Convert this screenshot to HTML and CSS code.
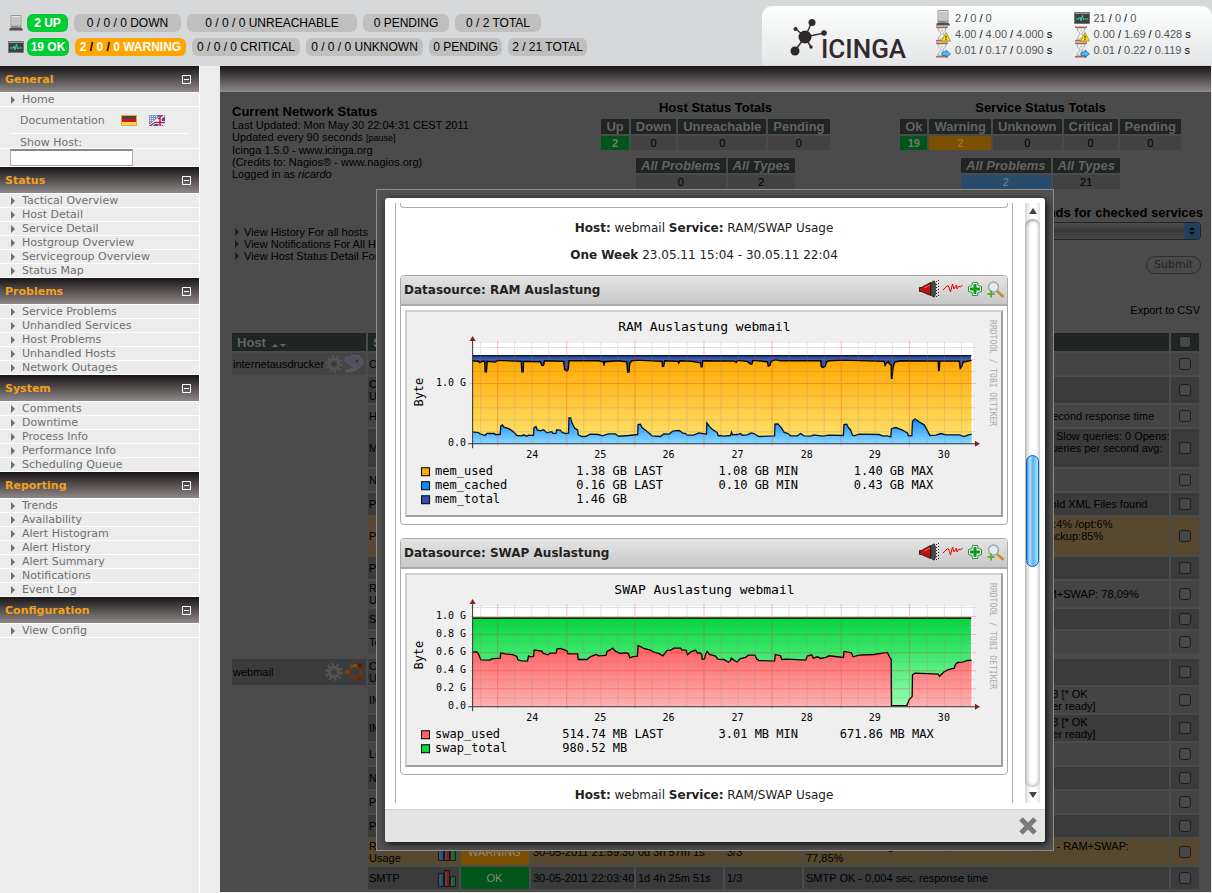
FILE: index.html
```html
<!DOCTYPE html>
<html lang="en">
<head>
<meta charset="utf-8">
<title>Icinga</title>
<link rel="stylesheet" href="styles.css">
</head>
<body>
<svg class="defs" width="0" height="0" aria-hidden="true">
  <defs>
    <clipPath id="plot"><path d="M262 200H1757V540H262z"/></clipPath>
    <linearGradient id="gOrange" x1="0" y1="0" x2="0" y2="1"><stop offset="0" stop-color="#ffa800"/><stop offset="1" stop-color="#ffe573"/></linearGradient>
    <linearGradient id="gBlue" gradientUnits="userSpaceOnUse" x1="0" y1="443" x2="0" y2="521"><stop offset="0" stop-color="#0a8cff"/><stop offset="1" stop-color="#8cd8ff"/></linearGradient>
    <linearGradient id="gGreen" x1="0" y1="0" x2="0" y2="1"><stop offset="0" stop-color="#00d83c"/><stop offset="1" stop-color="#98ffb4"/></linearGradient>
    <linearGradient id="gRed" x1="0" y1="0" x2="0" y2="1"><stop offset="0" stop-color="#ff6060"/><stop offset="1" stop-color="#ffb0b0"/></linearGradient>
    <symbol id="server" viewBox="0 0 16 16"><path d="M3 .5h10V12H3z" fill="#e4e4e4" stroke="#999"/><path d="M4 3h8M4 5h8M4 7h8M4 9h8" stroke="#aaa"/><path d="M3 10.500h10V13H3z" fill="#888"/><path d="M2 13h12l1 2.500H1z" fill="#505050"/><path d="M10 11.500h2" stroke="#7c7"/></symbol>
    <symbol id="monitor" viewBox="0 0 16 16"><path d="M.5 2.500h15v11H.5z" fill="#3c4244" stroke="#777"/><path d="M1 3.500h14" stroke="#999"/><path d="M2 9h3l1-2 1 4 1.500-6 1 5 1-1H14" fill="none" stroke="#3fd0a8"/></symbol>
    <symbol id="hourglass" viewBox="0 0 16 16"><path d="M3 2c0 4 3 4 3 6s-3 2-3 6h8c0-4-3-4-3-6s3-2 3-6z" fill="#f4f8fa" stroke="#8aa4b4"/><path d="M5 4h4L7 6zM4 13c1-2 5-2 6 0z" fill="#e8c070"/><path d="M1 .5h12V2H1zM1 14h12v1.500H1z" fill="#b06a48"/></symbol>
    <symbol id="hg-warn" viewBox="0 0 16 16"><use href="#hourglass"/><path d="M11 6.500L15.500 15h-9z" fill="#ffdf20" stroke="#a88a00" stroke-width=".8"/><path d="M11 9.500v3M11 13v1.200" stroke="#222"/></symbol>
    <symbol id="hg-go" viewBox="0 0 16 16"><use href="#hourglass"/><path d="M7 10h4V8l4.500 4L11 15.500V13.500H7z" fill="#58b8f0" stroke="#2070b0" stroke-width=".8"/></symbol>
    <symbol id="horn" viewBox="0 0 20 18"><path d="M.5 7.500h2l9-5v13l-9-4h-2z" fill="#c01010" stroke="#222"/><path d="M5 8l6-3" stroke="#f66"/><path d="M12 3l2-2h1.500l1 3v10l-1 3H14l-2-2z" fill="#484848" stroke="#222" stroke-width=".6"/><path d="M17.500 1v16M19.500 0v18" stroke="#222" stroke-dasharray="1 2"/></symbol>
    <symbol id="pulse" viewBox="0 0 20 18"><path d="M0 10l4-4h1.500l2 6 2-8 1.500 5 2.500-4 .5 4 2-3 1.500 1 2-2" fill="none" stroke="#e80000"/></symbol>
    <symbol id="plus" viewBox="0 0 16 16"><path d="M5.500 1.500h5l.5 3 3.500 1v5l-3.500 1-.5 3h-5l-.5-3-3.500-1v-5l3.500-1z" fill="#fff" stroke="#2a9040"/><path d="M6.500 3h3v3.500H13v3H9.500V13h-3V9.500H3v-3h3.500z" fill="#0c9c1c"/></symbol>
    <symbol id="magnify" viewBox="0 0 17 17"><path d="M11 11l4.500 4" stroke="#c8902c" stroke-width="3" stroke-linecap="round"/><circle cx="6.500" cy="6" r="5" fill="#dfeaf2" stroke="#a8a8a8" stroke-width="1.500"/><path d="M4 9.500v7M.5 13h7" stroke="#60b030" stroke-width="2"/></symbol>
    <symbol id="gear" viewBox="0 0 20 20"><circle cx="10" cy="10" r="7.500" fill="none" stroke="#535353" stroke-width="3" stroke-dasharray="2.400 2.310"/><circle cx="10" cy="10" r="5" fill="#484848" stroke="#575757" stroke-width="2"/><circle cx="10" cy="10" r="2" fill="#383838"/></symbol>
    <symbol id="swirl" viewBox="0 0 20 20"><path d="M2 3c2 1 4 0 6-1 5-2 10 1 11 6-1 5-7 9-16 10-2 0-2-2 0-2 4 0 7-2 8-5-3 1-5 0-6-2-3 0-5-3-3-6z" fill="#50505f" stroke="#5e5e72"/><circle cx="13" cy="7" r="1.200" fill="#33333f"/></symbol>
    <symbol id="ubuntu" viewBox="0 0 20 20"><circle cx="11" cy="10" r="6" fill="none" stroke="#6a3412" stroke-width="3"/><path d="M7 5a6.500 6.500 0 0 1 8 0" fill="none" stroke="#70501a" stroke-width="3"/><circle cx="3" cy="10" r="2.300" fill="#6c4214"/><circle cx="15.500" cy="3.500" r="2.300" fill="#5c1410"/><circle cx="15.500" cy="16.500" r="2.300" fill="#6c2410"/></symbol>
    <symbol id="bars" viewBox="0 0 20 20"><path d="M1.500 5.500h5v13h-5z" fill="#24506c" stroke="#101c28"/><path d="M7.500 2.500h5v16h-5z" fill="#6c2420" stroke="#2c0c0c"/><path d="M13.500 8.500h5v10h-5z" fill="#205c38" stroke="#0c2814"/><path d="M3 7v11M9 4v14M15 10v8" stroke="#5c5c5c"/></symbol>
    <symbol id="minus" viewBox="0 0 9 9"><path d="M.5.5h8v8h-8zM2 4.500h5" fill="none" stroke="#fff"/></symbol>
  </defs>
</svg>

<header class="top">
  <div class="tallies">
    <div class="tally">
      <svg width="16" height="16"><use href="#server"/></svg>
      <ul class="badges hosts"><li class="ok">2 UP</li><li>0 / 0 / 0 DOWN</li><li>0 / 0 / 0 UNREACHABLE</li><li>0 PENDING</li><li>0 / 2 TOTAL</li></ul>
    </div>
    <div class="tally">
      <svg width="16" height="16"><use href="#monitor"/></svg>
      <ul class="badges services"><li class="ok">19 OK</li><li class="warn">2 <i>/</i> 0 <i>/</i> 0 WARNING</li><li>0 / 0 / 0 CRITICAL</li><li>0 / 0 / 0 UNKNOWN</li><li>0 PENDING</li><li>2 / 21 TOTAL</li></ul>
    </div>
  </div>
  <div class="brand">
    <svg class="logo" viewBox="0 0 120 46" role="img" aria-label="Icinga">
      <g stroke="#3a3234" stroke-width="1.500"><path d="M15 19L22 4M15 19L6 11M15 19L34 15M15 19L4 34M15 19L21 29" fill="none"/></g>
      <g fill="#2e2829"><circle cx="15" cy="19" r="6.500"/><circle cx="22" cy="4.500" r="3.500"/><circle cx="5.500" cy="11" r="2"/><circle cx="34" cy="15" r="2.800"/><circle cx="5" cy="33" r="4.500"/><circle cx="21" cy="29" r="1.700"/></g>
      <text x="31" y="40" class="logo-text">ICINGA</text>
    </svg>
    <div class="perf">
      <div><svg width="16" height="16"><use href="#server"/></svg><span>2 <i>/</i> 0 <i>/</i> 0</span></div>
      <div><svg width="16" height="16"><use href="#hg-warn"/></svg><span>4.00 <i>/</i> 4.00 <i>/</i> 4.000 <i>s</i></span></div>
      <div><svg width="16" height="16"><use href="#hg-go"/></svg><span>0.01 <i>/</i> 0.17 <i>/</i> 0.090 <i>s</i></span></div>
    </div>
    <div class="perf">
      <div><svg width="16" height="16"><use href="#monitor"/></svg><span>21 <i>/</i> 0 <i>/</i> 0</span></div>
      <div><svg width="16" height="16"><use href="#hg-warn"/></svg><span>0.00 <i>/</i> 1.69 <i>/</i> 0.428 <i>s</i></span></div>
      <div><svg width="16" height="16"><use href="#hg-go"/></svg><span>0.01 <i>/</i> 0.22 <i>/</i> 0.119 <i>s</i></span></div>
    </div>
  </div>
</header>

<div class="frames">
  <nav class="side">
    <h2>General <button aria-label="Collapse General"><svg width="9" height="9"><use href="#minus"/></svg></button></h2>
    <ul><li><a href="#">Home</a></li></ul>
    <div class="docs"><span>Documentation</span>
      <a href="#" aria-label="German"><svg width="16" height="11" viewBox="0 0 16 11"><path d="M0 0h16v11H0z" fill="#d8a838"/><path d="M1 1h14v3H1z" fill="#444"/><path d="M1 4h14v3H1z" fill="#d81010"/><path d="M1 7h14v3H1z" fill="#ffd860"/></svg></a>
      <a href="#" aria-label="English"><svg width="16" height="11" viewBox="0 0 16 11"><path d="M0 0h16v11H0z" fill="#3c50a8"/><path d="M0 0h9v5L0 9z" fill="#8098d8"/><path d="M1 1.500h7M1 3.500h6M1 5.500h4" stroke="#fff" stroke-dasharray="1 1"/><path d="M1 11l14-11M8 4l8 6" stroke="#fff" stroke-width="3"/><path d="M6 7.500h10M11 2v9" stroke="#fff" stroke-width="3"/><path d="M5 7.500h11M11 2v9M1 11l4-3M9 4l5-4" stroke="#d81830" stroke-width="1.500"/></svg></a>
    </div>
    <form class="finder"><label for="show-host">Show Host:</label><div><input id="show-host" type="text"></div></form>
    <h2>Status <button aria-label="Collapse Status"><svg width="9" height="9"><use href="#minus"/></svg></button></h2>
    <ul><li><a href="#">Tactical Overview</a></li><li><a href="#">Host Detail</a></li><li><a href="#">Service Detail</a></li><li><a href="#">Hostgroup Overview</a></li><li><a href="#">Servicegroup Overview</a></li><li><a href="#">Status Map</a></li></ul>
    <h2>Problems <button aria-label="Collapse Problems"><svg width="9" height="9"><use href="#minus"/></svg></button></h2>
    <ul><li><a href="#">Service Problems</a></li><li><a href="#">Unhandled Services</a></li><li><a href="#">Host Problems</a></li><li><a href="#">Unhandled Hosts</a></li><li><a href="#">Network Outages</a></li></ul>
    <h2>System <button aria-label="Collapse System"><svg width="9" height="9"><use href="#minus"/></svg></button></h2>
    <ul><li><a href="#">Comments</a></li><li><a href="#">Downtime</a></li><li><a href="#">Process Info</a></li><li><a href="#">Performance Info</a></li><li><a href="#">Scheduling Queue</a></li></ul>
    <h2>Reporting <button aria-label="Collapse Reporting"><svg width="9" height="9"><use href="#minus"/></svg></button></h2>
    <ul><li><a href="#">Trends</a></li><li><a href="#">Availability</a></li><li><a href="#">Alert Histogram</a></li><li><a href="#">Alert History</a></li><li><a href="#">Alert Summary</a></li><li><a href="#">Notifications</a></li><li><a href="#">Event Log</a></li></ul>
    <h2>Configuration <button aria-label="Collapse Configuration"><svg width="9" height="9"><use href="#minus"/></svg></button></h2>
    <ul><li><a href="#">View Config</a></li></ul>
  </nav>

  <main class="main">
    <div class="bar"></div>
    <div class="summary">
      <div class="network">
        <h1>Current Network Status</h1>
        Last Updated: Mon May 30 22:04:31 CEST 2011<br>
        Updated every 90 seconds <small>[pause]</small><br>
        Icinga 1.5.0 - www.icinga.org<br>
        (Credits to: Nagios® - www.nagios.org)<br>
        Logged in as <em>ricardo</em>
      </div>
      <div class="totals">
        <h3>Host Status Totals</h3>
        <table><tr><th>Up</th><th>Down</th><th>Unreachable</th><th>Pending</th></tr><tr><td class="c-ok">2</td><td>0</td><td>0</td><td>0</td></tr></table>
        <table class="all"><tr><th>All Problems</th><th>All Types</th></tr><tr><td>0</td><td>2</td></tr></table>
      </div>
      <div class="totals">
        <h3>Service Status Totals</h3>
        <table><tr><th>Ok</th><th>Warning</th><th>Unknown</th><th>Critical</th><th>Pending</th></tr><tr><td class="c-ok">19</td><td class="c-warn">2</td><td>0</td><td>0</td><td>0</td></tr></table>
        <table class="all"><tr><th>All Problems</th><th>All Types</th></tr><tr><td class="c-prob">2</td><td>21</td></tr></table>
      </div>
    </div>
    <div class="actions">
      <ul class="views"><li><a href="#">View History For all hosts</a></li><li><a href="#">View Notifications For All Hosts</a></li><li><a href="#">View Host Status Detail For All Hosts</a></li></ul>
      <form class="commands">
        <label for="cmd">Commands for checked services</label>
        <div class="pick"><select id="cmd"><option>Select command</option></select><span class="step"></span></div>
        <button type="button">Submit</button>
        <a href="#">Export to CSV</a>
      </form>
    </div>
    <table class="status">
      <colgroup><col class="w-host"><col class="w-svc"><col class="w-stat"><col class="w-last"><col class="w-dur"><col class="w-att"><col><col class="w-cb"></colgroup>
      <tr class="head"><th>Host <span class="sort"></span></th><th>Service</th><th>Status</th><th>Last Check</th><th>Duration</th><th>Attempt</th><th>Status Information</th><td><input type="checkbox" aria-label="All services"></td></tr>
      <tr class="lt h22"><td><div class="cell">internetausdrucker<svg width="20" height="20"><use href="#gear"/></svg><svg width="20" height="20"><use href="#swirl"/></svg></div></td><td>CPU Load</td><td></td><td></td><td></td><td></td><td></td><td><input type="checkbox" aria-label="CPU Load"></td></tr>
      <tr class="dk h26"><td></td><td>CPU<br>Usage</td><td></td><td></td><td></td><td></td><td></td><td><input type="checkbox" aria-label="CPU Usage"></td></tr>
      <tr class="lt h22"><td></td><td>HTTP</td><td></td><td></td><td></td><td></td><td>HTTP OK HTTP/1.1 200 OK - 452 bytes in 0.001 second response time</td><td><input type="checkbox" aria-label="HTTP"></td></tr>
      <tr class="dk h38"><td></td><td>MySQL</td><td></td><td></td><td></td><td></td><td>Uptime: 1201853 Threads: 1 Questions: 88312604 Slow queries: 0 Opens:<br>342 Flush tables: 1 Open tables: 64 Queries: 20 Queries per second avg:<br>0.73</td><td><input type="checkbox" aria-label="MySQL"></td></tr>
      <tr class="lt h22"><td></td><td>NTP</td><td></td><td></td><td></td><td></td><td></td><td><input type="checkbox" aria-label="NTP"></td></tr>
      <tr class="dk h22"><td></td><td>PNP</td><td></td><td></td><td></td><td></td><td>OK: 26 XML Files checked in perfdata dir today. 0 old XML Files found</td><td><input type="checkbox" aria-label="PNP"></td></tr>
      <tr class="wn h38"><td></td><td>Partitions</td><td></td><td></td><td></td><td></td><td>WARNING - Disk usage: /:42% /home:61% % /tmp:4% /opt:6%<br>/usr:38% /var:27% /srv:12% /boot:18% /dev /var/backup:85%<br>&nbsp;</td><td><input type="checkbox" aria-label="Partitions"></td></tr>
      <tr class="dk h22"><td></td><td>Ping</td><td></td><td></td><td></td><td></td><td></td><td><input type="checkbox" aria-label="Ping"></td></tr>
      <tr class="lt h26"><td></td><td>RAM/SWAP<br>Usage</td><td></td><td></td><td></td><td></td><td>OK - Usage: RAM: 81,42% - SWAP: 52,50% - RAM+SWAP: 78,09%</td><td><input type="checkbox" aria-label="RAM/SWAP Usage"></td></tr>
      <tr class="dk h20"><td></td><td>SSH</td><td></td><td></td><td></td><td></td><td></td><td><input type="checkbox" aria-label="SSH"></td></tr>
      <tr class="lt h22"><td></td><td>Total</td><td></td><td></td><td></td><td></td><td></td><td><input type="checkbox" aria-label="Total"></td></tr>
      <tr class="gap"><td colspan="8"></td></tr>
      <tr class="dk h26"><td><div class="cell">webmail<svg width="20" height="20"><use href="#gear"/></svg><svg width="20" height="20"><use href="#ubuntu"/></svg></div></td><td>CPU<br>Usage</td><td></td><td></td><td></td><td></td><td></td><td><input type="checkbox" aria-label="webmail CPU"></td></tr>
      <tr class="lt h26"><td></td><td>IMAP</td><td></td><td></td><td></td><td></td><td>IMAP OK - 0.001 second response time on port 143 [* OK<br>[CAPABILITY IMAP4rev1 LOGIN-REFERRAL server ready]</td><td><input type="checkbox" aria-label="IMAP"></td></tr>
      <tr class="dk h26"><td></td><td>IMAPS</td><td></td><td></td><td></td><td></td><td>IMAP OK - 0.001 second response time on port 993 [* OK<br>[CAPABILITY IMAP4rev1 LOGIN-REFERRAL server ready]</td><td><input type="checkbox" aria-label="IMAPS"></td></tr>
      <tr class="lt h22"><td></td><td>Load</td><td></td><td></td><td></td><td></td><td></td><td><input type="checkbox" aria-label="Load"></td></tr>
      <tr class="dk h22"><td></td><td>NTP</td><td></td><td></td><td></td><td></td><td></td><td><input type="checkbox" aria-label="webmail NTP"></td></tr>
      <tr class="lt h22"><td></td><td>Ping</td><td></td><td></td><td></td><td></td><td></td><td><input type="checkbox" aria-label="webmail Ping"></td></tr>
      <tr class="dk h22"><td></td><td>POP3</td><td></td><td></td><td></td><td></td><td></td><td><input type="checkbox" aria-label="POP3"></td></tr>
      <tr class="wn h26"><td></td><td><div class="cell">RAM/SWAP<br>Usage<svg width="20" height="20"><use href="#bars"/></svg></div></td><td class="s-warn">WARNING</td><td>30-05-2011 21:59:30</td><td>0d 3h 57m 1s</td><td>3/3</td><td>WARNING - Usage: RAM: 91,20% - SWAP: 52,5% - RAM+SWAP:<br>77,85%</td><td><input type="checkbox" aria-label="webmail RAM"></td></tr>
      <tr class="dk h22"><td></td><td><div class="cell">SMTP<svg width="20" height="20"><use href="#bars"/></svg></div></td><td class="s-ok">OK</td><td>30-05-2011 22:03:40</td><td>1d 4h 25m 51s</td><td>1/3</td><td>SMTP OK - 0,004 sec. response time</td><td><input type="checkbox" aria-label="SMTP"></td></tr>
    </table>

    <div class="overlay">
      <section class="dialog" role="dialog" aria-label="Performance graphs">
        <div class="sheet">
          <div class="sheet-body">
            <div class="view">
              <div class="tail"></div>
              <p class="first"><b>Host:</b> webmail <b>Service:</b> RAM/SWAP Usage</p>
              <p class="range"><b>One Week</b> 23.05.11 15:04 - 30.05.11 22:04</p>
              <article class="source">
                <header><h4>Datasource: RAM Auslastung</h4><span class="tools"><svg width="20" height="18"><use href="#horn"/></svg><svg width="20" height="18"><use href="#pulse"/></svg><svg width="16" height="16"><use href="#plus"/></svg><svg width="17" height="17"><use href="#magnify"/></svg></span></header>
                <svg class="graph" viewBox="407 312 593 203">
                  <path d="M472 343h500v100H472z" fill="#fff"/>
                  <g transform="translate(385 270) scale(.33333)" clip-path="url(#plot)">
                    <path d="M262 258H1755V521H262z" fill="#3350a4"/>
                    <path fill="url(#gOrange)" stroke="#000" stroke-width="4" d="M256 521V272H262L280 274 284 278 290 274H299L300 305H304L306 274 330 276 338 271 408 274 410 305H414L415 274 465 275 470 286H475L478 272 535 274 538 298 545 303 549 298 551 272H640L655 276 656 287 658 275 700 272 724 275 727 306H731L733 280 740 272 756 270 830 274 831 289 835 288 838 272 878 274 880 279 884 272 920 274 945 278 947 290H950L952 272 1045 273 1052 277 1057 271 1085 274 1095 282H1099L1102 271 1145 275 1148 288 1153 286 1157 274 1170 269 1185 272H1305L1307 290 1313 292 1319 288 1322 276 1330 272 1375 270 1495 274 1498 286 1503 278 1508 275 1511 282 1516 284 1517 325H1519L1522 290 1527 276 1545 272 1657 273 1658 301H1660L1662 273H1720L1723 295 1727 290 1732 276 1757 271H1765V521"/>
                    <path fill="url(#gBlue)" stroke="#001428" stroke-width="4" d="M256 521V485H262L280 487 285 491 300 496 305 490H328L330 493H345L347 467 352 464 355 470 372 476 385 485 395 496 410 497 415 494 425 498 430 495 445 496 446 474 452 469 456 479 465 482 475 479 485 488 500 484 502 489 512 490 514 479 525 480 530 486 540 490 550 489 551 443H556L560 458 568 474 577 479 579 494 590 499H600L615 492 640 493 650 497 670 491H690L700 498 730 496 757 493 758 463 765 462 770 472 785 484 795 492 800 497 825 499 835 491 850 492 862 483 880 481 887 484 890 488 900 490 905 495H925L940 488 963 492 964 458 973 470 980 477 995 487 998 497 1005 496 1015 498 1035 496 1038 486 1041 494 1055 493 1065 490 1070 495 1085 494 1097 488 1105 490 1120 499 1167 497 1168 462 1177 461 1188 474 1195 486 1207 490 1215 497H1235L1245 490 1255 497 1275 498 1285 494 1310 498 1330 495 1373 496 1375 463 1383 462 1388 472 1395 480 1400 495 1405 497 1420 492 1480 493 1490 497H1505L1515 500 1517 476 1530 472 1550 480 1565 488 1567 496 1578 497 1580 453 1587 446 1600 455 1615 464 1625 482 1632 496 1650 495 1665 490 1680 494H1720L1735 499 1745 495 1757 492H1765V521"/>
                    <path d="M262 257H1757" stroke="#0c1838" stroke-width="5"/>
                  </g>
                  <g class="grid">
                    <path d="M480.500 342v101M514.500 342v101M531.500 342v101M548.500 342v101M583.500 342v101M600.500 342v101M617.500 342v101M651.500 342v101M668.500 342v101M686.500 342v101M720.500 342v101M737.500 342v101M754.500 342v101M788.500 342v101M806.500 342v101M823.500 342v101M857.500 342v101M874.500 342v101M891.500 342v101M926.500 342v101M943.500 342v101M960.500 342v101M471 347.500h503M471 359.500h503M471 371.500h503M471 395.500h503M471 407.500h503M471 419.500h503M471 431.500h503"/>
                    <path class="major" d="M497.500 341v105M566.500 341v105M634.500 341v105M703.500 341v105M771.500 341v105M840.500 341v105M908.500 341v105M470 383.500h505"/>
                  </g>
                  <path d="M472.500 341v107M468 443.500h508" stroke="#333"/>
                  <path d="M472.500 336l3 5h-6zM979 443.500l-5-3v6z" fill="#8c1c1c"/>
                  <text x="704" y="331" class="t-title">RAM Auslastung webmail</text>
                  <text transform="translate(423 392) rotate(-90)" class="t-unit">Byte</text>
                  <text transform="translate(989 373) rotate(90)" class="t-mark">RRDTOOL / TOBI OETIKER</text>
                  <g class="t-y"><text x="466" y="386">1.0 G</text><text x="466" y="446">0.0</text></g>
                  <g class="t-x"><text x="532" y="458">24</text><text x="600" y="458">25</text><text x="668" y="458">26</text><text x="737" y="458">27</text><text x="806" y="458">28</text><text x="874" y="458">29</text><text x="943" y="458">30</text></g>
                  <g stroke="#000"><path d="M421.500 467.500h8v8h-8z" fill="#ffa800"/><path d="M421.500 481.500h8v8h-8z" fill="#0a8cff"/><path d="M421.500 495.500h8v8h-8z" fill="#3350a4"/></g>
                  <g class="t-leg"><text x="435" y="475">mem_used</text><text x="435" y="489">mem_cached</text><text x="435" y="503">mem_total</text><text x="576" y="475">1.38 GB LAST</text><text x="576" y="489">0.16 GB LAST</text><text x="576" y="503">1.46 GB</text><text x="718" y="475">1.08 GB MIN</text><text x="718" y="489">0.10 GB MIN</text><text x="853" y="475">1.40 GB MAX</text><text x="853" y="489">0.43 GB MAX</text></g>
                </svg>
              </article>
              <article class="source">
                <header><h4>Datasource: SWAP Auslastung</h4><span class="tools"><svg width="20" height="18"><use href="#horn"/></svg><svg width="20" height="18"><use href="#pulse"/></svg><svg width="16" height="16"><use href="#plus"/></svg><svg width="17" height="17"><use href="#magnify"/></svg></span></header>
                <svg class="graph" viewBox="407 575 593 189">
                  <path d="M472 606h500v100H472z" fill="#fff"/>
                  <g transform="translate(385 530) scale(.33333)" clip-path="url(#plot)">
                    <path d="M262 264H1755V529H262z" fill="url(#gGreen)"/>
                    <path fill="url(#gRed)" stroke="#100" stroke-width="4" d="M256 529V366H262L275 365 281 373 287 389 315 390 320 386 345 384 347 368 360 371 385 374 395 379 398 389 412 393H427L430 377 435 380 445 379 447 360 470 363 473 369 488 374 495 369H513L515 357 525 355 545 362 548 371H577L579 388H605L615 380 632 373 640 377 662 376 665 364 672 361 682 354 690 363 705 370 722 368 730 371 733 383 740 380 756 378 758 347 767 350 775 355 795 360 805 366 820 370 832 377 838 370 845 361H855L865 354H885L890 360H902L906 374 915 366 930 360 937 370 943 367 949 374 950 387 957 386 960 374 965 364 972 373 990 378 997 387 1015 388 1028 396 1035 392 1037 384 1045 390 1055 396 1063 386 1080 382 1088 375H1108L1113 386 1120 391 1167 393 1169 373 1185 377 1188 388 1205 387 1260 390 1265 378 1278 374 1283 384 1295 380 1305 385 1323 381 1330 377 1373 382 1375 364 1397 368 1402 380 1420 375 1465 373 1495 368 1505 367 1511 380 1516 388 1517 526H1563L1570 508 1579 499 1580 434 1587 429 1657 432 1661 438 1667 432 1673 426 1685 419 1705 414 1708 404 1715 397 1730 396 1745 391 1757 390H1765V529"/>
                    <path d="M262 264H1757" stroke="#022808" stroke-width="5"/>
                  </g>
                  <g class="grid">
                    <path d="M480.500 605v101M514.500 605v101M531.500 605v101M548.500 605v101M583.500 605v101M600.500 605v101M617.500 605v101M651.500 605v101M668.500 605v101M686.500 605v101M720.500 605v101M737.500 605v101M754.500 605v101M788.500 605v101M806.500 605v101M823.500 605v101M857.500 605v101M874.500 605v101M891.500 605v101M926.500 605v101M943.500 605v101M960.500 605v101M471 607.500h503M471 625.500h503M471 643.500h503M471 661.500h503M471 679.500h503M471 697.500h503"/>
                    <path class="major" d="M497.500 604v105M566.500 604v105M634.500 604v105M703.500 604v105M771.500 604v105M840.500 604v105M908.500 604v105M470 616.500h505M470 634.500h505M470 652.500h505M470 670.500h505M470 688.500h505"/>
                  </g>
                  <path d="M472.500 604v107M468 706.500h508" stroke="#333"/>
                  <path d="M472.500 599l3 5h-6zM979 706.500l-5-3v6z" fill="#8c1c1c"/>
                  <text x="704" y="594" class="t-title">SWAP Auslastung webmail</text>
                  <text transform="translate(423 655) rotate(-90)" class="t-unit">Byte</text>
                  <text transform="translate(989 636) rotate(90)" class="t-mark">RRDTOOL / TOBI OETIKER</text>
                  <g class="t-y"><text x="466" y="619">1.0 G</text><text x="466" y="637">0.8 G</text><text x="466" y="655">0.6 G</text><text x="466" y="673">0.4 G</text><text x="466" y="691">0.2 G</text><text x="466" y="709">0.0</text></g>
                  <g class="t-x"><text x="532" y="721">24</text><text x="600" y="721">25</text><text x="668" y="721">26</text><text x="737" y="721">27</text><text x="806" y="721">28</text><text x="874" y="721">29</text><text x="943" y="721">30</text></g>
                  <g stroke="#000"><path d="M421.500 730.500h8v8h-8z" fill="#ff6060"/><path d="M421.500 744.500h8v8h-8z" fill="#00d83c"/></g>
                  <g class="t-leg"><text x="435" y="738">swap_used</text><text x="435" y="752">swap_total</text><text x="562" y="738">514.74 MB LAST</text><text x="562" y="752">980.52 MB</text><text x="718" y="738">3.01 MB MIN</text><text x="839" y="738">671.86 MB MAX</text></g>
                </svg>
              </article>
              <p class="next"><b>Host:</b> webmail <b>Service:</b> RAM/SWAP Usage</p>
            </div>
            <div class="scroll"><span class="up"></span><div class="track"><div class="thumb"></div></div><span class="down"></span></div>
          </div>
          <footer><button aria-label="Close"><svg width="18" height="18" viewBox="0 0 18 18"><path d="M2 2l14 14M16 2L2 16" stroke="#7a7a7a" stroke-width="5"/></svg></button></footer>
        </div>
      </section>
    </div>
  </main>
</div>
</body>
</html>
```
FILE: styles.css
```css
* { box-sizing: border-box; }
body {
  margin: 0;
  height: 100vh;
  display: flex;
  flex-direction: column;
  overflow: hidden;
  background: #ececec;
  color: #000;
  font: 11px/12px "Liberation Sans", Arial, sans-serif;
}
ul { list-style: none; margin: 0; padding: 0; }
a { color: inherit; text-decoration: none; }
i { font-style: normal; }
button { padding: 0; border: 0; background: none; font: inherit; color: inherit; }
svg { flex: none; display: block; }
.defs { position: absolute; }

/* top status strip */
.top { flex: none; height: 66px; display: flex; justify-content: space-between; background: #d7d8da; }
.tallies { display: flex; flex-direction: column; gap: 6px; padding: 14px 0 0 8px; }
.tally { display: flex; align-items: center; gap: 3px; }
.badges { display: grid; gap: 6px; }
.hosts { grid-template-columns: 41px 107px 170px 86px 86px; }
.services { grid-template-columns: 42px 111px 108px 117px 73px 79px; }
.badges li {
  height: 18px;
  border-radius: 6px;
  background: #bfbfbf;
  text-align: center;
  white-space: nowrap;
  font-size: 12px;
  line-height: 18px;
}
.badges .ok { background: #00cc33; color: #fff; font-weight: bold; }
.badges .warn { background: #ffa500; color: #fff; font-weight: bold; }
.badges .warn i { color: #000; }
.brand {
  width: 450px;
  margin: 6px 0 1px;
  padding: 4px 0 0 28px;
  display: flex;
  border-radius: 10px 10px 0 0;
  background: linear-gradient(#fdfefe, #e4e6e7);
}
.logo { width: 120px; height: 46px; margin: 8px 25px 0 0; }
.logo-text { font: 500 26px Roboto, sans-serif; fill: #33292d; }
.perf { width: 139px; color: #555; }
.perf div { display: flex; align-items: center; height: 16px; gap: 4px; white-space: nowrap; }
.perf i { color: #000; }

.frames { flex: 1; min-height: 0; display: flex; gap: 20px; }

/* navigation */
.side {
  flex: none;
  width: 200px;
  border-right: 1px solid #fff;
  color: #6c7070;
  font: 11px/13px "DejaVu Sans", Verdana, sans-serif;
}
.side h2 {
  display: flex;
  align-items: center;
  justify-content: space-between;
  height: 26px;
  margin: 0;
  padding: 0 8px 0 5px;
  background: linear-gradient(#1a1616, #8f8888);
  color: #f5a01c;
  font-size: 11px;
}
.side ul { border-top: 1px solid #fff; }
.side li { display: flex; align-items: center; gap: 7px; height: 14px; padding: 1px 0 0 11px; border-bottom: 1px solid #fff; }
.side li::before, .views li::before {
  content: "";
  border: 4px solid transparent;
  border-left-color: currentColor;
  border-right-width: 0;
}
.side li a { line-height: 14px; }
.docs { display: flex; align-items: center; gap: 12px; height: 27px; margin: 0 10px; padding-left: 10px; border-bottom: 1px solid #fff; }
.docs span { margin-right: 4px; }
.finder label { display: block; height: 15px; padding: 2px 0 0 20px; border-bottom: 1px solid #fff; }
.finder div { height: 18px; padding-left: 10px; border-bottom: 1px solid #fff; }
.finder input { display: block; width: 123px; height: 17px; border: 1px solid #aaa; border-top: 2px solid #888; background: #fff; }

/* dimmed main frame */
.main { position: relative; flex: 1; min-width: 0; margin: 0 1px 1px 0; overflow: hidden; background: #4b4b4b; }
.bar { height: 26px; background: linear-gradient(#1a1616, #8f8888); }
.summary { display: grid; grid-template-columns: 1fr 1fr 1fr; padding: 8px 8px 0; height: 108px; }
.network { padding: 4px 0 0 4px; }
.network h1 { margin: 0; font-size: 13px; line-height: 15px; }
.network small { font-size: 9px; }
.totals { text-align: center; }
.totals h3 { margin: 0; font-size: 13px; line-height: 15px; }
.totals table { margin: 2px auto 0; border-spacing: 2px; }
.totals .all { margin-top: 4px; font-style: normal; }
.totals th { padding: 0 5px; background: #202423; color: #636363; font-size: 13px; line-height: 15px; }
.totals .all th { font-style: italic; }
.totals td { padding: 0; background: #424242; line-height: 14px; }
.totals .c-ok { background: #00561a; color: #777; font-weight: bold; }
.totals .c-warn { background: #7c5000; color: #a08040; }
.totals .c-prob { background: #294c6c; color: #6c8298; }
.actions { display: flex; justify-content: space-between; padding: 5px 8px 0 12px; height: 131px; }
.views { padding-top: 21px; }
.views li { display: flex; align-items: center; gap: 5px; padding-left: 3px; }
.views li::before { border-left-color: #1c1c1c; }
.commands { display: flex; flex-direction: column; align-items: flex-end; }
.commands label { font-size: 13px; font-weight: bold; line-height: 16px; }
.pick { position: relative; margin: 1px 2px 0 0; }
.pick select {
  display: block;
  appearance: none;
  width: 240px;
  height: 18px;
  border: 1px solid #222;
  border-radius: 4px;
  background: linear-gradient(#4e4e4e, #383838 50%, #484848);
  font-size: 11px;
}
.step { position: absolute; right: 1px; top: 1px; width: 16px; height: 16px; border-radius: 0 3px 3px 0; background: #22405c; }
.step::before, .step::after { content: ""; position: absolute; left: 5px; border: 3px solid transparent; }
.step::before { top: 1px; border-bottom-color: #000; }
.step::after { bottom: 1px; border-top-color: #000; }
.commands button {
  width: 55px;
  height: 18px;
  margin: 16px 2px 0 0;
  border: 1px solid #2e2e2e;
  border-radius: 9px;
  color: #222;
  font: 11px/16px "DejaVu Sans", Verdana, sans-serif;
}
.commands a { margin: 30px 3px 0 0; }

.status { table-layout: fixed; width: calc(100% - 20px); margin-left: 10px; border-spacing: 2px; }
.w-host { width: 134px; }
.w-svc { width: 91px; }
.w-stat { width: 68px; }
.w-last { width: 103px; }
.w-dur { width: 87px; }
.w-att { width: 77px; }
.w-cb { width: 28px; }
.status td { padding: 0 2px 0 1px; overflow: hidden; white-space: nowrap; }
.status td:nth-child(n+4) { padding-left: 2px; }
.status td:last-child { padding: 0; }
.status .head th { height: 18px; padding: 0 5px; background: #202423; color: #636363; font-size: 13px; line-height: 15px; text-align: left; white-space: nowrap; overflow: hidden; }
.status .head td { background: #202423; }
.sort::before, .sort::after { content: ""; display: inline-block; margin-left: 2px; border: 3px solid transparent; border-top: 0; border-bottom-color: #666; }
.sort::after { border-top: 3px solid #666; border-bottom: 0; }
.lt td { background: #444; }
.dk td { background: #3b3b3b; }
.wn td { background: #57482f; }
.status tr td:first-child:empty, .gap td { background: none; }
.h20 td { height: 20px; }
.h22 td { height: 22px; }
.h26 td { height: 26px; }
.h38 td { height: 38px; }
.gap td { height: 2px; padding: 0; }
.status .gap td { font-size: 0; line-height: 0; }
.cell { display: flex; align-items: center; height: 22px; line-height: 12px; }
.cell svg:first-of-type { margin-left: auto; }
.status .s-warn, .status .s-ok { text-align: center; color: #888; background: #7c5000; }
.status .s-ok { background: #00561a; }
.status input {
  display: block;
  appearance: none;
  width: 12px;
  height: 12px;
  margin: 0 auto;
  border: 1px solid #1e1e1e;
  border-radius: 3px;
  background: #484848;
}

/* dialog */
.overlay { position: absolute; inset: 123px 1px 0 0; display: flex; justify-content: center; align-items: flex-start; }
.dialog { width: 678px; padding: 8px; border: 1px solid #8e8e8e; background: #515151; }
.sheet { border-radius: 3px; background: #fff; box-shadow: 2px 2px 7px #111; overflow: hidden; }
.sheet-body { display: flex; gap: 12px; height: 611px; padding: 5px 5px 6px 10px; }
.view {
  flex: 1;
  min-width: 0;
  padding: 0 4px;
  overflow: hidden;
  border: 1px solid #aaa;
  border-width: 0 1px;
  color: #222;
  font: 12px/16px "DejaVu Sans", Verdana, sans-serif;
}
.tail { height: 5px; border: 1px solid #aaa; border-top: 0; border-radius: 0 0 4px 4px; }
.view p { margin: 0; text-align: center; }
.view .first { margin-top: 12px; }
.view .range { margin-top: 11px; }
.view .next { margin-top: 12px; }
.source { margin-top: 12px; padding-bottom: 7px; border: 1px solid #aaa; border-radius: 4px; }
.source + .source { margin-top: 13px; }
.source header {
  display: flex;
  align-items: center;
  justify-content: space-between;
  height: 30px;
  padding: 0 3px;
  border-bottom: 2px solid #aaa;
  border-radius: 3px 3px 0 0;
  background: linear-gradient(#e4e4e4, #c8c8c8);
}
.source h4 { margin: 0; font-size: 12px; }
.tools { display: flex; align-items: center; gap: 4px; padding-bottom: 2px; }
.graph {
  width: calc(100% - 8px);
  margin: 4px 4px 0;
  border: 2px solid;
  border-color: #cfcfcf #9f9f9f #9f9f9f #cfcfcf;
  background: #efefef;
}
.graph text { font-family: "DejaVu Sans Mono", monospace; fill: #000; }
.graph .t-title { font-size: 13px; text-anchor: middle; }
.graph .t-unit { font-size: 12px; text-anchor: middle; }
.graph .t-mark { font-size: 8px; text-anchor: middle; fill: #aaa; }
.t-y { font-size: 10px; text-anchor: end; }
.t-x { font-size: 10px; text-anchor: middle; }
.t-leg { font-size: 12px; }
.grid { fill: none; stroke: #8c8c8c; stroke-opacity: .25; }
.grid .major { stroke: #e03030; stroke-opacity: .3; }

.scroll { display: flex; flex-direction: column; width: 15px; background: linear-gradient(90deg, #d8d8d8, #fff 40%, #fff 70%, #e4e4e4); }
.scroll span { height: 16px; display: grid; place-items: center; }
.scroll span::before { content: ""; border: 4px solid transparent; border-top-width: 0; border-bottom: 6px solid #444; }
.scroll .down::before { border-top: 6px solid #444; border-bottom-width: 0; }
.track { position: relative; flex: 1; border-radius: 7px; box-shadow: inset 1px 2px 3px #aaa, inset -1px -2px 3px #ccc; }
.thumb {
  position: absolute;
  left: 1px;
  right: 1px;
  top: 41.5%;
  height: 112px;
  border: 1px solid #1058b8;
  border-radius: 7px;
  background: linear-gradient(90deg, #3c88e8, #b8e0fc 25%, #58b0f4 55%, #a8ecff);
}
.sheet footer { display: flex; align-items: center; justify-content: flex-end; height: 33px; padding: 0 8px; border-top: 1px solid #d0d0d0; background: #e4e4e4; }
```
